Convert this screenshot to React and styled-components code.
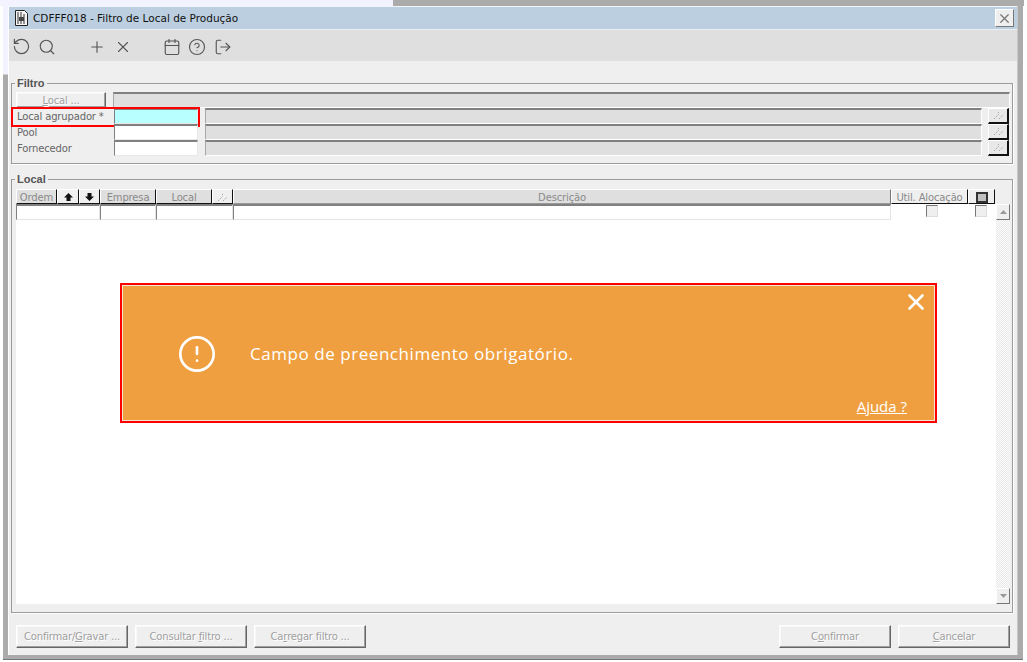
import React from "react";
import styled, { createGlobalStyle } from "styled-components";
import { RotateCcw, Search, Plus, X, Calendar, CircleHelp, LogOut, CircleAlert } from "lucide-react";

const Global = createGlobalStyle`
  html, body { margin: 0; padding: 0; background: #fff; }
  * { box-sizing: border-box; }
`;

const Page = styled.div`
  position: relative;
  width: 1027px;
  height: 662px;
  overflow: hidden;
  background: #fff;
  display: flex;
  flex-direction: column;
  font-family: "DejaVu Sans", "Liberation Sans", sans-serif;
  font-size: 10px;
`;
const TopStrip = styled.div`
  height: 6px;
  display: flex;
  margin-right: 3px;
`;
const TopLeft = styled.div`
  width: 393px;
  background: #f3f3ff;
`;
const TopRight = styled.div`
  flex: 1;
  background: #ababab;
`;
const Frame = styled.div`
  display: flex;
  height: 654px;
`;
const LeftEdge = styled.div`
  width: 9px;
  padding-left: 3px;
  background: #fff;
  display: flex;
`;
const LeftBar = styled.div`
  width: 5px;
  background: linear-gradient(#f3f3ff 0, #f3f3ff 68px, #ababab 69px);
  border-bottom: 1px solid #777;
`;
const RightEdge = styled.div`
  width: 6px;
  background: #ababab;
  border-left: 1px solid #c8c8c8;
  margin-right: 4px;
  border-bottom: 1px solid #777;
`;
const Win = styled.div`
  width: 1009px;
  display: flex;
  flex-direction: column;
  background: #efefef;
  border-top: 1px solid #f2f6fa;
  position: relative;
`;
const WinFoot = styled.div`
  height: 5px;
  background: #ababab;
  border-bottom: 1px solid #777;
  margin-top: auto;
  margin-left: -6px;
  margin-right: -6px;
`;
const TitleBar = styled.div`
  height: 23px;
  flex: none;
  background: #bccfe0;
  border-bottom: 1px solid #e8eef4;
  display: flex;
  align-items: center;
  padding: 0 3px 0 6px;
  color: #111;
  font-size: 10.5px;
`;
const TitleText = styled.span`
  margin-left: 5px;
  flex: 1;
`;
const CloseBtn = styled.div`
  width: 19px;
  height: 18px;
  background: #efefef;
  border: 1px solid;
  border-color: #fff #777 #777 #fff;
  display: flex;
  align-items: center;
  justify-content: center;
  color: #777;
`;
const Toolbar = styled.div`
  height: 31px;
  flex: none;
  background: #dfdfdf;
  display: flex;
  align-items: center;
  padding: 2px 0 0 3px;
  color: #555;
`;
const Tool = styled.div`
  display: flex;
  margin-right: ${(p) => p.$gap}px;
`;
const Body = styled.div`
  flex: 1;
  display: flex;
  flex-direction: column;
  padding: 16px 4px 0 2px;
  min-height: 0;
`;
const Group = styled.fieldset`
  margin: 0 0 ${(p) => p.$mb || 0}px;
  padding: ${(p) => p.$pad};
  min-width: 0;
  min-inline-size: 0;
  border: 1px solid #9c9c9c;
  box-shadow: 1px 1px 0 #fff;
  flex: ${(p) => (p.$grow ? 1 : "none")};
  display: flex;
  flex-direction: column;
`;
const Legend = styled.legend`
  padding: 0 2px;
  margin-left: -1px;
  font-size: 11px;
  line-height: 13px;
  font-weight: bold;
  font-family: "Liberation Sans", sans-serif;
  color: #555;
`;
const Row = styled.div`
  height: 16px;
  display: flex;
`;
const LabelGroup = styled.div`
  position: relative;
  display: flex;
`;
const Highlight = styled.div`
  position: absolute;
  left: -5px;
  top: -1px;
  right: -2px;
  bottom: -3px;
  border: 2px solid #f00;
  pointer-events: none;
`;
const Label = styled.div`
  width: 98px;
  padding-left: 1px;
  line-height: 17px;
  color: #666;
  font-size: 10px;
  letter-spacing: -0.15px;
`;
const Input = styled.div`
  width: 84px;
  height: 16px;
  background: ${(p) => p.$bg || "#fff"};
  border-top: 2px solid #808080;
  border-left: 1px solid #808080;
  border-right: 1px solid #e8e8e8;
  border-bottom: 1px solid #e8e8e8;
`;
const Display = styled.div`
  flex: 1;
  height: 16px;
  margin-left: ${(p) => p.$left}px;
  background: #dfdfdf;
  border-top: 2px solid #808080;
  border-left: 1px solid #a8a8a8;
  border-right: 1px solid #fff;
  border-bottom: 1px solid #fff;
`;
const LookupBtn = styled.div`
  width: 21px;
  height: 16px;
  margin: 0 1px 0 6px;
  background: #e8e8e8;
  border-right: 2px solid #111;
  border-bottom: 2px solid #111;
  border-top: 1px solid #fff;
  border-left: 1px solid #fff;
  display: flex;
  align-items: center;
  justify-content: center;
`;
const Raised = styled.div`
  width: ${(p) => p.$w}px;
  height: ${(p) => p.$h}px;
  background: #efefef;
  border: 1px solid;
  border-color: #fff #666 #666 #fff;
  box-shadow: inset -1px -1px 0 #a0a0a0, inset 1px 1px 0 #f8f8f8;
  display: flex;
  align-items: center;
  justify-content: center;
  color: #a0a0a0;
  text-shadow: 1px 1px 0 #fff;
  font-size: 10px;
  letter-spacing: -0.2px;
  white-space: pre;
`;
const U = styled.span`
  text-decoration: underline;
`;
const Head = styled.div`
  display: flex;
  height: 15px;
  margin-right: 15px;
  flex: none;
`;
const HeadCell = styled.div`
  width: ${(p) => (p.$w ? p.$w + "px" : "auto")};
  flex: ${(p) => (p.$w ? "none" : 1)};
  background: ${(p) => (p.$light ? "#efefef" : "#dfdfdf")};
  border-top: 1px solid #fff;
  border-left: 1px solid #fff;
  border-right: 1px solid ${(p) => (p.$black ? "#111" : "#777")};
  border-bottom: 1px solid ${(p) => (p.$black ? "#111" : "#999")};
  display: flex;
  align-items: center;
  justify-content: center;
  padding-top: 1px;
  color: #8a8a8a;
  font-size: 10px;
  letter-spacing: -0.15px;
  white-space: nowrap;
`;
const Swatch = styled.div`
  width: 12px;
  height: 11px;
  background: #c0c0c0;
  border: 2px solid #333;
`;
const GridBody = styled.div`
  flex: 1;
  display: flex;
  min-height: 0;
`;
const GridMain = styled.div`
  flex: 1;
  background: #fff;
`;
const DataRow = styled.div`
  display: flex;
  height: 16px;
`;
const DataCell = styled.div`
  width: ${(p) => p.$w}px;
  flex: none;
  border-top: 2px solid #808080;
  border-left: 1px solid #808080;
  border-bottom: 1px solid #e4e4e4;
  border-right: 1px solid #e4e4e4;
  background: #fff;
`;
const CheckCell = styled.div`
  width: ${(p) => p.$w}px;
  flex: none;
  display: flex;
  padding-left: ${(p) => p.$pl}px;
  padding-top: 1px;
`;
const Check = styled.div`
  width: 12px;
  height: 12px;
  background: #efefef;
  border-top: 1px solid #777;
  border-left: 1px solid #777;
  border-right: 1px solid #ddd;
  border-bottom: 1px solid #ddd;
`;
const ScrollBar = styled.div`
  width: 14px;
  display: flex;
  flex-direction: column;
  background: repeating-conic-gradient(#e6e6e6 0 25%, #fff 0 50%) 0 0 / 2px 2px;
`;
const ScrollBtn = styled.div`
  width: 14px;
  height: 16px;
  background: #efefef;
  border: 1px solid;
  border-color: #fff #777 #777 #fff;
  display: flex;
  align-items: center;
  justify-content: center;
  margin-top: ${(p) => (p.$down ? "auto" : 0)};
`;
const Footer = styled.div`
  flex: none;
  height: 42px;
  padding: 12px 7px 0 7px;
  display: flex;
  justify-content: space-between;
`;
const BtnGroup = styled.div`
  display: flex;
  gap: 7px;
`;
const Alert = styled.div`
  position: absolute;
  left: 120px;
  top: 283px;
  width: 817px;
  height: 140px;
  border: 2px solid #f00;
  display: flex;
  flex-direction: column;
`;
const AlertInner = styled.div`
  flex: 1;
  background: #ef9f40;
  border: 1px solid #f5e6d0;
  color: #fff;
  display: flex;
  flex-direction: column;
  font-family: "Open Sans", sans-serif;
`;
const AlertTop = styled.div`
  height: 34px;
  display: flex;
  justify-content: flex-end;
  padding: 3px 5px 0 0;
`;
const AlertMiddle = styled.div`
  height: 68px;
  display: flex;
  align-items: center;
  padding-left: 54px;
`;
const AlertText = styled.div`
  margin-left: 33px;
  padding-bottom: 2px;
  font-size: 17px;
  letter-spacing: 0.55px;
`;
const AlertBottom = styled.div`
  flex: 1;
  display: flex;
  justify-content: flex-end;
  padding: 9px 27px 0 0;
`;
const Help = styled.a`
  font-size: 15px;
  line-height: 18px;
  text-decoration: underline;
  color: #fff;
`;

const Slashes = () => (
  <svg width="11" height="9" viewBox="0 0 11 9" aria-hidden="true">
    <path d="M1 8L6 3M6 8L10 4M5 1.5h1" stroke="#a8a8a8" strokeWidth="1" fill="none" strokeDasharray="1.5 1" />
  </svg>
);
const Up = () => (
  <svg width="9" height="8" viewBox="0 0 9 8" aria-hidden="true"><path d="M4.5 0L9 4.5H6.5V8h-4V4.5H0z" fill="#111" /></svg>
);
const Down = () => (
  <svg width="9" height="8" viewBox="0 0 9 8" aria-hidden="true"><path d="M4.5 8L9 3.5H6.5V0h-4v3.5H0z" fill="#111" /></svg>
);
const Tri = ({ down }) => (
  <svg width="7" height="4" viewBox="0 0 7 4" aria-hidden="true"><path d={down ? "M0 0h7L3.5 4z" : "M3.5 0L7 4H0z"} fill="#999" /></svg>
);
const DocIcon = () => (
  <svg width="13" height="16" viewBox="0 0 13 16" aria-hidden="true">
    <path d="M.5.5h9l3 3v12H.5z" fill="#f4f4f4" stroke="#222" />
    <path d="M2 3h6M2 5h8M2 7h9M2 9h9M2 11h9M2 13h9" stroke="#333" strokeDasharray="2 1" />
    <rect x="4" y="7" width="5" height="4" fill="#444" />
  </svg>
);

export default function App() {
  return (
    <Page>
      <Global />
      <TopStrip><TopLeft /><TopRight /></TopStrip>
      <Frame>
        <LeftEdge><LeftBar /></LeftEdge>
        <Win>
          <TitleBar>
            <DocIcon />
            <TitleText>CDFFF018 - Filtro de Local de Produção</TitleText>
            <CloseBtn><X size={15} strokeWidth={2} /></CloseBtn>
          </TitleBar>
          <Toolbar>
            <Tool $gap={7}><RotateCcw size={19} strokeWidth={1.5} /></Tool>
            <Tool $gap={32}><Search size={18} strokeWidth={1.5} /></Tool>
            <Tool $gap={8}><Plus size={18} strokeWidth={1.5} /></Tool>
            <Tool $gap={31}><X size={18} strokeWidth={1.5} /></Tool>
            <Tool $gap={7}><Calendar size={18} strokeWidth={1.5} /></Tool>
            <Tool $gap={8}><CircleHelp size={18} strokeWidth={1.5} /></Tool>
            <Tool $gap={0}><LogOut size={18} strokeWidth={1.5} style={{ transform: "scaleX(-1) rotate(180deg)" }} /></Tool>
          </Toolbar>
          <Body>
            <Group $pad="2px 2px 7px 4px" $mb={9}>
              <Legend>Filtro</Legend>
              <Row>
                <Raised $w={90} $h={16}><U>L</U>ocal ...</Raised>
                <Display $left={7} />
              </Row>
              <Row>
                <LabelGroup>
                  <Label>Local agrupador *</Label>
                  <Input $bg="#b8ffff" />
                  <Highlight />
                </LabelGroup>
                <Display $left={7} />
                <LookupBtn><Slashes /></LookupBtn>
              </Row>
              <Row>
                <LabelGroup>
                  <Label>Pool</Label>
                  <Input />
                </LabelGroup>
                <Display $left={7} />
                <LookupBtn><Slashes /></LookupBtn>
              </Row>
              <Row>
                <LabelGroup>
                  <Label>Fornecedor</Label>
                  <Input />
                </LabelGroup>
                <Display $left={7} />
                <LookupBtn><Slashes /></LookupBtn>
              </Row>
            </Group>
            <Group $pad="3px 2px 8px 4px" $grow>
              <Legend>Local</Legend>
              <Head>
                <HeadCell $w={41} $black>Ordem</HeadCell>
                <HeadCell $w={22} $black $light><Up /></HeadCell>
                <HeadCell $w={21} $black $light><Down /></HeadCell>
                <HeadCell $w={56} $black>Empresa</HeadCell>
                <HeadCell $w={56} $black>Local</HeadCell>
                <HeadCell $w={21} $black $light><Slashes /></HeadCell>
                <HeadCell>Descrição</HeadCell>
                <HeadCell $w={77} $black $light>Util. Alocação</HeadCell>
                <HeadCell $w={27} $black $light><Swatch /></HeadCell>
              </Head>
              <GridBody>
                <GridMain>
                  <DataRow>
                    <DataCell $w={84} />
                    <DataCell $w={56} />
                    <DataCell $w={77} />
                    <DataCell $w={658} />
                    <CheckCell $w={84} $pl={35}><Check /></CheckCell>
                    <CheckCell $w={20} $pl={0}><Check /></CheckCell>
                  </DataRow>
                </GridMain>
                <ScrollBar>
                  <ScrollBtn><Tri /></ScrollBtn>
                  <ScrollBtn $down><Tri down /></ScrollBtn>
                </ScrollBar>
              </GridBody>
            </Group>
          </Body>
          <Footer>
            <BtnGroup>
              <Raised $w={112} $h={23}>Confirmar/<U>G</U>ravar ...</Raised>
              <Raised $w={112} $h={23}>Consultar <U>f</U>iltro ...</Raised>
              <Raised $w={112} $h={23}>Ca<U>r</U>regar filtro ...</Raised>
            </BtnGroup>
            <BtnGroup>
              <Raised $w={112} $h={23}>C<U>o</U>nfirmar</Raised>
              <Raised $w={112} $h={23}><U>C</U>ancelar</Raised>
            </BtnGroup>
          </Footer>
          <WinFoot />
        </Win>
        <RightEdge />
      </Frame>
      <Alert>
        <AlertInner>
          <AlertTop><X size={26} strokeWidth={2.4} /></AlertTop>
          <AlertMiddle>
            <CircleAlert size={40} strokeWidth={1.6} />
            <AlertText>Campo de preenchimento obrigatório.</AlertText>
          </AlertMiddle>
          <AlertBottom><Help>Ajuda ?</Help></AlertBottom>
        </AlertInner>
      </Alert>
    </Page>
  );
}
